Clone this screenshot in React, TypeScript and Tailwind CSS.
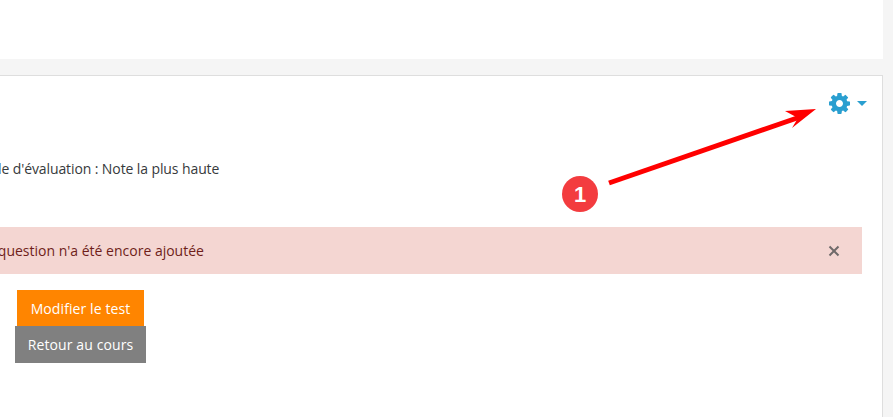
const App = () => {
  return (
    <div className="relative h-[417px] w-[893px] overflow-hidden bg-[#f5f5f5] font-['Open_Sans',sans-serif] text-[#373a3c]">
      {/* Top block */}
      <div className="h-[59px] w-[883px] bg-white" />

      {/* Main card, cut off by the left edge of the window */}
      <div className="mt-4 ml-[-60px] h-[400px] w-[943px] border border-[#dedede] bg-white">
        <div className="flex h-[50px] items-start justify-end pt-[17px] pr-[15px]">
          <div className="flex items-center gap-[7px] text-[#2a9fd0]">
            <svg viewBox="128 128 1536 1536" className="h-[21px] w-[21px] fill-current">
              <path
                fillRule="evenodd"
                d="M1152 896q0-106-75-181t-181-75-181 75-75 181 75 181 181 75 181-75 75-181zm512-109v222q0 12-8 23t-20 13l-185 28q-19 54-39 91 35 50 107 138 10 12 10 25t-9 23q-27 37-99 108t-94 71q-12 0-26-9l-138-108q-44 23-91 38-16 136-29 186-7 27-35 27h-222q-14 0-24.5-8.5t-11.5-21.5l-28-184q-49-16-90-37l-141 107q-10 9-25 9-14 0-25-11-126-114-165-168-7-10-7-23 0-12 8-23 15-21 51-66.5t54-70.5q-27-50-41-99l-183-27q-13-2-21-12.5t-8-23.5v-222q0-13 8-23.5t19-12.5l186-28q14-46 39-92-40-57-107-138-10-12-10-24 0-10 9-23 26-36 98.5-107.5t94.5-71.5q13 0 26 10l138 107q44-23 91-38 16-136 29-186 7-27 35-27h222q14 0 24.5 8.5t11.5 21.5l28 184q49 16 90 37l142-107q9-9 24-9 13 0 25 10 129 119 165 170 7 8 7 22 0 12-8 23-15 21-51 66.5t-54 70.5q26 50 41 98l183 28q13 2 21 12.5t8 23.5z"
              />
            </svg>
            <span className="h-0 w-0 border-x-[5px] border-t-[5px] border-x-transparent border-t-[#2a9fd0]" />
          </div>
        </div>

        <p className="mt-[33px] pl-[10px] text-[14px] leading-[20px] tracking-[-0.1px] whitespace-nowrap">
          Méthode d'évaluation : Note la plus haute
        </p>

        {/* Alert */}
        <div className="mt-[48px] mr-5 flex h-[47px] items-center justify-between bg-[#f4d6d2] pr-[22px] pl-[4px] text-[14px] text-[#6f1e1a]">
          <span className="whitespace-nowrap">Aucune question n'a été encore ajoutée</span>
          <svg viewBox="0 0 12 12" className="h-3 w-3 stroke-[#6f6a6a] stroke-2">
            <path d="M1.5 1.5l9 9M10.5 1.5l-9 9" />
          </svg>
        </div>

        {/* Buttons */}
        <div className="mt-4 ml-[74px] flex w-[131px] flex-col items-center text-[14px] tracking-[0.1px] text-white">
          <button className="flex h-9 w-[127px] items-center justify-center bg-[#ff8500]">Modifier le test</button>
          <button className="flex h-[37px] w-[131px] items-center justify-center bg-[#808080]">Retour au cours</button>
        </div>
      </div>

      {/* Annotation */}
      <svg viewBox="0 0 893 417" className="pointer-events-none absolute inset-0 h-[417px] w-[893px]">
        <path d="M609 183L800 117" stroke="#ff0000" strokeWidth="5" />
        <path d="M816 109L785 111L798 118L792 128Z" fill="#ff0000" />
      </svg>
      <div className="absolute top-[176px] left-[562px] flex h-9 w-9 items-center justify-center rounded-full bg-[#f33c3f] font-['Liberation_Sans',sans-serif] text-[22px] font-bold text-white">
        1
      </div>
    </div>
  );
};

export default App;
